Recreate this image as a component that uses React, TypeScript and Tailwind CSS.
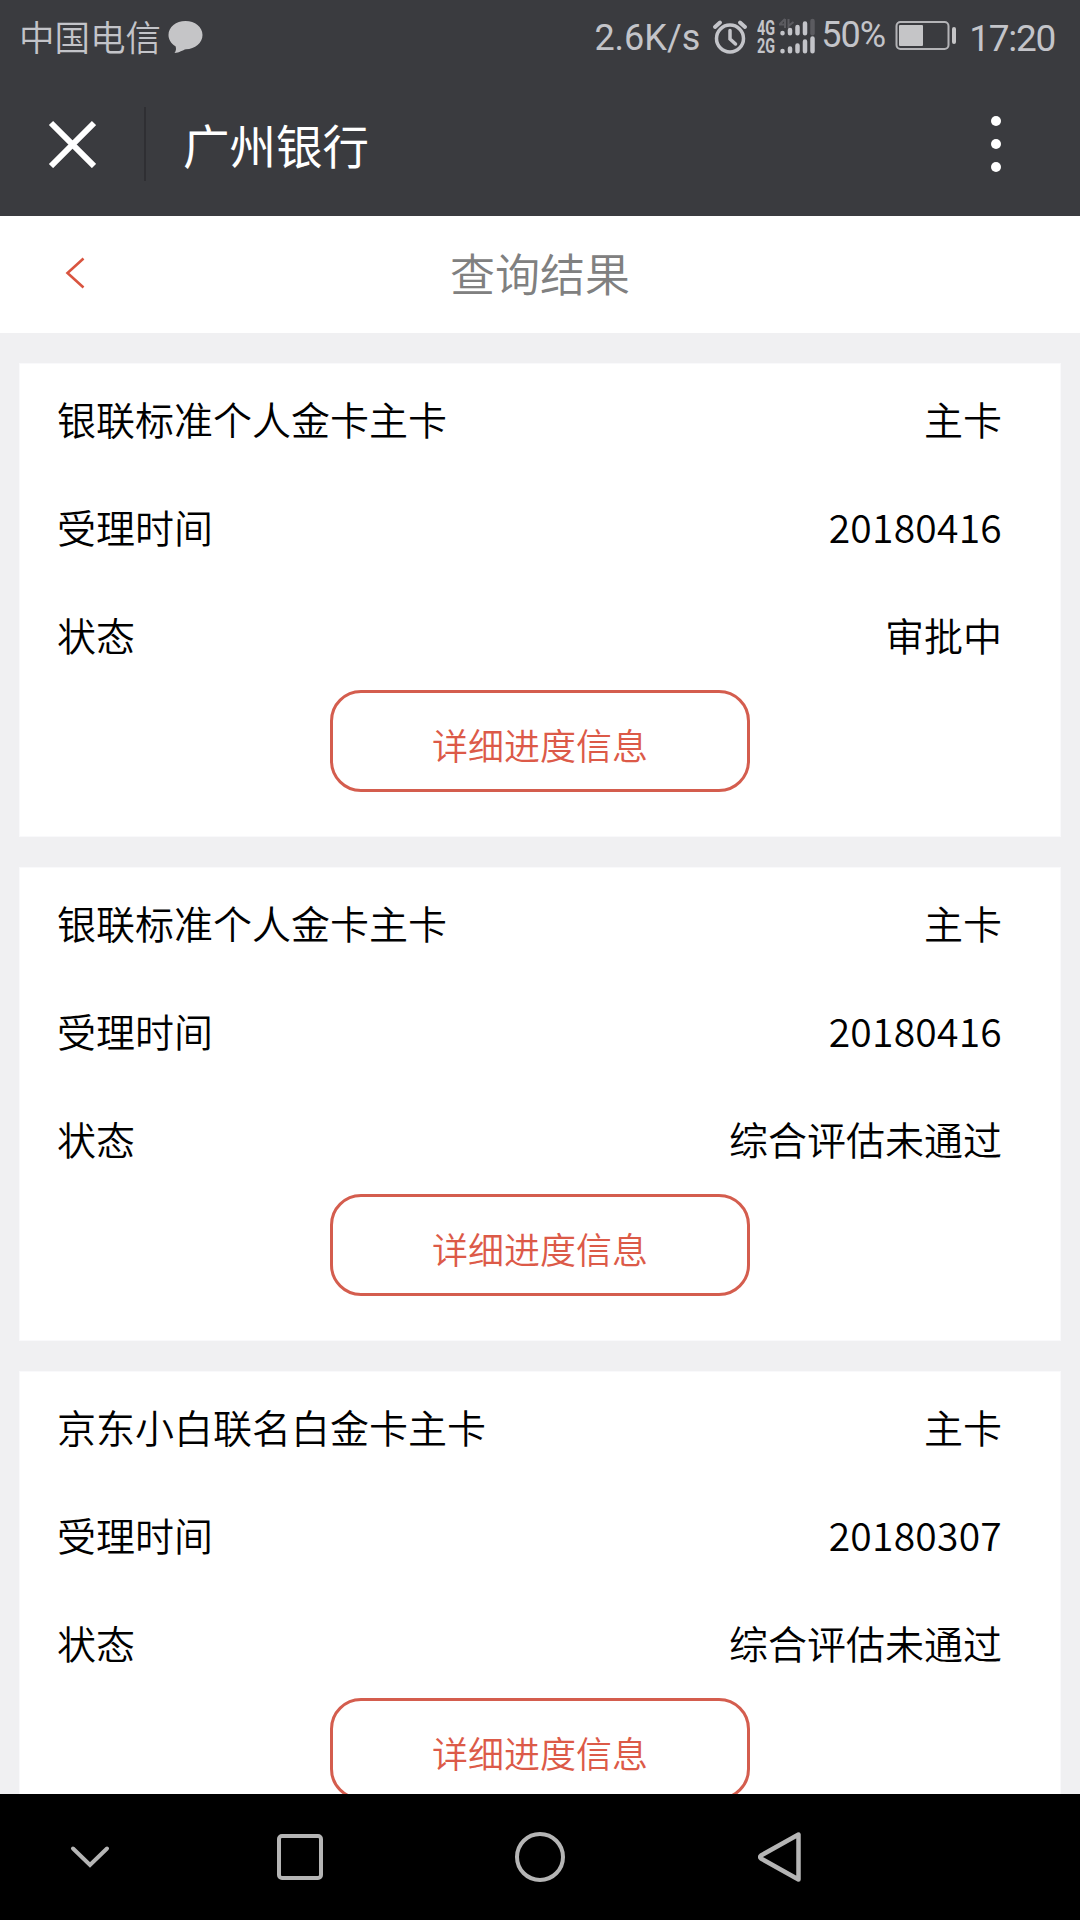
interface CardRecord {
  name: string;
  type: string;
  date: string;
  status: string;
}

const records: CardRecord[] = [
  { name: "银联标准个人金卡主卡", type: "主卡", date: "20180416", status: "审批中" },
  { name: "银联标准个人金卡主卡", type: "主卡", date: "20180416", status: "综合评估未通过" },
  { name: "京东小白联名白金卡主卡", type: "主卡", date: "20180307", status: "综合评估未通过" },
];

function StatusBar() {
  return (
    <div className="flex h-[74px] items-center pl-[19px] pr-[25px] text-[#c3c4c9]">
      <span className="pb-0.5 text-[35.5px] leading-none">中国电信</span>
      <svg className="ml-[7px] h-[34px] w-[35px]" viewBox="0 0 35 34" fill="#c5c5c7">
        <path d="M17.5 1C27 1 34.500 7 34.500 15S27 29 18 29.300C14.500 30 11.500 33 6.500 33C8 31 8.500 28.500 7.500 26.200C3 23.500 .5 19.500 .5 15C.5 7 8 1 17.500 1Z" />
      </svg>

      <div className="ml-auto flex items-center font-['Roboto',sans-serif] font-normal">
        <span className="pt-0.5 text-[36px] leading-none">2.6K/s</span>
        {/* 闹钟 */}
        <svg className="ml-3 h-[36px] w-[36px]" viewBox="0 0 36 36" fill="none" stroke="currentColor">
          <circle cx="18" cy="19.500" r="13.500" strokeWidth="3.500" />
          <path d="M18 11.500V20L23.500 25" strokeWidth="3.500" strokeLinecap="round" />
          <path d="M3 8L8 3.500M33 8L28 3.500" strokeWidth="4" strokeLinecap="round" />
        </svg>
        {/* 双卡信号 */}
        <div className="ml-[9px] flex h-[38px] items-center">
          <div className="flex w-[22px] flex-col text-[18px] leading-[18px] font-bold">
            <span className="origin-left scale-x-[.8] scale-y-[1.1]">4G</span>
            <span className="origin-left scale-x-[.8] scale-y-[1.1]">2G</span>
          </div>
          <svg className="h-[38px] w-[38px]" viewBox="22 0 38 38" fill="none">
            <g stroke="currentColor" strokeWidth="4.500" strokeLinecap="round">
              <path d="M25.500 15V15.200M33 12V15.200M40.500 9V15.200M48 5.500V15.200" />
              <path d="M25.500 33V33.200M33 30.500V33.200M40.500 27.500V33.200M48 23.500V33.200M55.500 20.500V33.200" />
              <path d="M55.500 3V15.200" stroke="#5b5b60" />
            </g>
            <path d="M28 1V10M22 6.500H28M28 1L22.500 6.500M31.500 1V10M31.500 8L36.500 4" stroke="#5b5b60" strokeWidth="2" />
          </svg>
        </div>
        <span className="ml-1 mb-1 block w-[65px] text-[36px] leading-none tracking-[-1px]">50%</span>
        <svg className="ml-[9px] mb-[3px] h-[31px] w-[63px]" viewBox="0 0 63 31">
          <rect x="1.500" y="2" width="52" height="27" rx="4" fill="none" stroke="#b4b4b7" strokeWidth="2" />
          <rect x="4" y="5" width="24" height="21" rx="1" fill="#c5c5c7" />
          <rect x="57" y="7" width="4" height="17" rx="2" fill="#c5c5c7" />
        </svg>
        <span className="ml-[11px] pt-0.5 text-[37px] leading-none tracking-[-1.3px]">17:20</span>
      </div>
    </div>
  );
}

function AppBar() {
  return (
    <div className="flex h-[140px] items-center">
      <svg className="ml-12 h-12 w-12" viewBox="0 0 48 48" stroke="#fff" strokeWidth="6">
        <path d="M3 3L46 46M46 3L3 46" />
      </svg>
      <div className="ml-12 h-[74px] w-0.5 bg-[#2f2f33]" />
      <h1 className="ml-[37px] text-[46.5px] leading-none font-normal text-white">广州银行</h1>
      <div className="mr-[79px] ml-auto flex flex-col gap-[13px]">
        <i className="size-2.5 rounded-full bg-white" />
        <i className="size-2.5 rounded-full bg-white" />
        <i className="size-2.5 rounded-full bg-white" />
      </div>
    </div>
  );
}

function Row({ label, value }: { label: string; value: string }) {
  return (
    <div className="flex h-[108px] items-center justify-between pb-[3px] text-[39px] leading-none">
      <span>{label}</span>
      <span className={/^\d+$/.test(value) ? "tracking-[.25px]" : undefined}>{value}</span>
    </div>
  );
}

function ResultCard({ record }: { record: CardRecord }) {
  return (
    <section className="h-[474px] shrink-0 border border-[#f9f9fb] bg-white pt-0.5 pr-[58px] pl-[37px]">
      <Row label={record.name} value={record.type} />
      <Row label="受理时间" value={record.date} />
      <Row label="状态" value={record.status} />
      <button className="ml-[273px] block h-[102px] w-[420px] rounded-[31px] border-3 border-[#d45d4e] pt-[5px] text-[36px] leading-none text-[#dc5a48]">
        详细进度信息
      </button>
    </section>
  );
}

function NavBar() {
  return (
    <nav className="flex h-[126px] shrink-0 items-center bg-black">
      <div className="flex w-[180px] justify-center">
        <svg className="h-[50px] w-[50px]" viewBox="0 0 50 50" fill="none" stroke="#b5b5b5" strokeWidth="4" strokeLinecap="round">
          <path d="M8 16.500L25 33L42 16.500" />
        </svg>
      </div>
      <div className="flex w-[240px] justify-center">
        <div className="size-[46px] rounded-[5px] border-[4.500px] border-[#b5b5b5]" />
      </div>
      <div className="flex w-[240px] justify-center">
        <div className="size-[50px] rounded-full border-[4.500px] border-[#b5b5b5]" />
      </div>
      <div className="flex w-[240px] justify-center">
        <svg className="h-[50px] w-[44px]" viewBox="0 0 44 50" fill="none" stroke="#b5b5b5" strokeWidth="4.500" strokeLinejoin="round">
          <path d="M40.500 2.500V47.500L3 26.500Q1.500 25 3 23.500Z" />
        </svg>
      </div>
    </nav>
  );
}

export default function App() {
  return (
    <div className="flex h-[1920px] w-[1080px] flex-col overflow-hidden bg-[#f0f0f2] font-['Noto_Sans_CJK_SC',sans-serif] font-[350] text-black">
      <header className="h-[216px] shrink-0 bg-[#3a3b3f]">
        <StatusBar />
        <AppBar />
      </header>

      {/* 标题栏 */}
      <div className="flex h-[117px] shrink-0 items-center bg-white pb-[3px]">
        <svg className="ml-[65px] h-8 w-5" viewBox="0 0 20 32" fill="none" stroke="#d9543f" strokeWidth="2.600">
          <path d="M18.500 1.500L2.500 16L18.500 30.500" />
        </svg>
        <h2 className="flex-1 pr-[85px] pb-0.5 text-center text-[45px] leading-none font-[350] text-[#808080]">查询结果</h2>
      </div>

      <main className="flex flex-1 flex-col gap-[30px] overflow-hidden px-[19px] pt-[30px]">
        {records.map((record, i) => (
          <ResultCard key={i} record={record} />
        ))}
      </main>

      <NavBar />
    </div>
  );
}
